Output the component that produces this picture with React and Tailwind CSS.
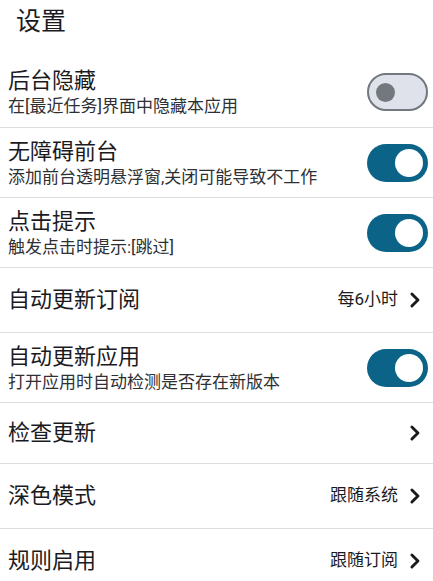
import React, { useState } from 'react';

const FONT = { fontFamily: 'Roboto, "Noto Sans CJK SC", sans-serif' };

function Toggle({ on, onChange }) {
  return (
    <button
      type="button"
      onClick={onChange}
      className={
        'relative flex h-[38px] w-[61px] shrink-0 items-center rounded-full ' +
        (on ? 'bg-[#0b6487]' : 'border-[2.5px] border-[#72787e] bg-[#dfe2ea]')
      }
    >
      {on ? (
        <span className="absolute right-[5px] h-[28px] w-[28px] rounded-full bg-white" />
      ) : (
        <span className="absolute left-[7px] h-[19px] w-[19px] rounded-full bg-[#72787e]" />
      )}
    </button>
  );
}

function Chevron() {
  return (
    <svg viewBox="0 0 24 24" className="h-[28px] w-[28px] shrink-0" fill="none" stroke="#1b1b1f" strokeWidth="2.5" strokeLinecap="round" strokeLinejoin="round">
      <path d="M10.2 6.8 15.4 12l-5.2 5.2" />
    </svg>
  );
}

function Row({ title, desc, value, toggle, on, onToggle, h, first }) {
  return (
    <div
      className={
        'flex items-center justify-between pl-2 pr-[5px] ' +
        (first ? '' : 'border-t border-[#dedede]')
      }
      style={{ height: h }}
    >
      <div className={'flex flex-col ' + (desc ? 'pt-[2px]' : '')}>
        <div className="text-[22px] leading-[26px] text-[#1b1b1f]">{title}</div>
        {desc && <div className="text-[17px] leading-[24px] text-[#2f3033]">{desc}</div>}
      </div>
      {toggle ? (
        <Toggle on={on} onChange={onToggle} />
      ) : (
        <div className="flex items-center">
          {value && <span className="mr-[2px] text-[17px] text-[#1b1b1f]">{value}</span>}
          <Chevron />
        </div>
      )}
    </div>
  );
}

export default function App() {
  const [state, setState] = useState({ hide: false, a11y: true, tip: true, autoApp: true });
  const flip = (k) => setState({ ...state, [k]: !state[k] });

  return (
    <div className="h-[581px] w-[433px] overflow-hidden bg-white" style={FONT}>
      <div className="flex h-[57px] items-start pl-4 pt-[5px]">
        <h1 className="text-[25px] leading-[34px] text-[#1b1b1f]">设置</h1>
      </div>
      <Row first h={70} title="后台隐藏" desc="在[最近任务]界面中隐藏本应用" toggle on={state.hide} onToggle={() => flip('hide')} />
      <Row h={70} title="无障碍前台" desc="添加前台透明悬浮窗,关闭可能导致不工作" toggle on={state.a11y} onToggle={() => flip('a11y')} />
      <Row h={70} title="点击提示" desc="触发点击时提示:[跳过]" toggle on={state.tip} onToggle={() => flip('tip')} />
      <Row h={65} title="自动更新订阅" value="每6小时" />
      <Row h={70} title="自动更新应用" desc="打开应用时自动检测是否存在新版本" toggle on={state.autoApp} onToggle={() => flip('autoApp')} />
      <Row h={61} title="检查更新" />
      <Row h={65} title="深色模式" value="跟随系统" />
      <Row h={65} title="规则启用" value="跟随订阅" />
    </div>
  );
}
